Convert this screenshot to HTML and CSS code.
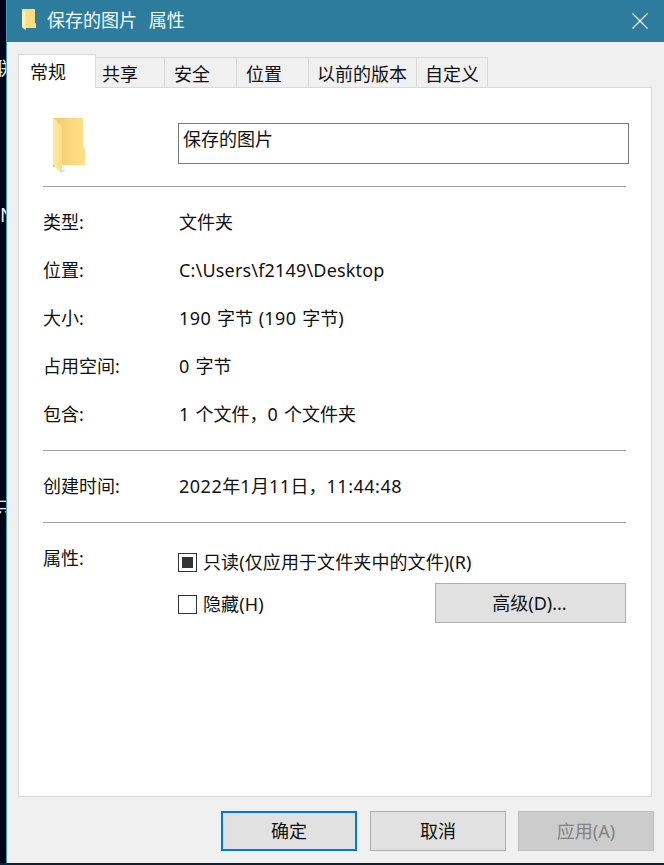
FILE: index.html
```html
<!DOCTYPE html>
<html lang="zh-CN">
<head>
<meta charset="utf-8">
<title>保存的图片 属性</title>
<link rel="stylesheet" href="styles.css">
</head>
<body>
<div class="desktop">
  <span class="frag frag-a">联</span>
  <span class="frag frag-b">N</span>
  <span class="frag frag-c">只</span>
</div>
<div class="window">
  <header class="titlebar">
    <svg class="title-icon" width="14" height="21" viewBox="0 0 14 21"><path d="M0 0h13v14h1v5H3.500v2L0 18z" fill="#fbdc85"/><path d="M0 0l3.500 3.500V21L0 18z" fill="#fff0b0"/></svg>
    <span class="title-text">保存的图片 属性</span>
    <svg class="close" width="16" height="16" viewBox="0 0 16 16"><path d="M.5.500l15 15M15.500.500l-15 15" stroke="#fff" stroke-width="1.100" fill="none"/></svg>
  </header>
  <div class="content">
    <nav class="tabs">
      <span class="tab active">常规</span>
      <span class="tab t1">共享</span>
      <span class="tab t2">安全</span>
      <span class="tab t3">位置</span>
      <span class="tab t4">以前的版本</span>
      <span class="tab t5">自定义</span>
    </nav>
    <main class="panel">
      <section class="name-row">
        <svg class="folder" width="36" height="58" viewBox="0 0 36 58">
          <defs>
            <linearGradient id="fg" x1="0" x2="1" y1="0" y2="0"><stop offset="0" stop-color="#eec96c"/><stop offset=".6" stop-color="#fbd97f"/><stop offset="1" stop-color="#ffe08a"/></linearGradient>
            <linearGradient id="ff" x1="0" x2="1" y1="0" y2="0"><stop offset="0" stop-color="#ffeba6"/><stop offset="1" stop-color="#fcdc84"/></linearGradient>
          </defs>
          <path d="M1 1h30v30h2v17H10v2H1z" fill="url(#fg)"/>
          <path d="M1 1l3 2 2 3 2 1 2 3v46l-3-2-2-2-4-5z" fill="url(#ff)"/>
          <path d="M10 53l3-1v2l-3 2z" fill="#e2e2e2"/>
          <path d="M33 48l2-1v1z" fill="#eee"/>
        </svg>
        <div class="name-box">保存的图片</div>
      </section>
      <hr class="rule">
      <dl class="info">
        <dt>类型:</dt><dd>文件夹</dd>
        <dt>位置:</dt><dd class="path">C:\Users\f2149\Desktop</dd>
        <dt>大小:</dt><dd><span class="num">190</span> 字节 (<span class="num">190</span> 字节)</dd>
        <dt>占用空间:</dt><dd><span class="num">0</span> 字节</dd>
        <dt>包含:</dt><dd><span class="num">1</span> 个文件，<span class="num">0</span> 个文件夹</dd>
      </dl>
      <hr class="rule">
      <dl class="info">
        <dt>创建时间:</dt><dd><span class="num">2022</span>年<span class="num">1</span>月<span class="num">11</span>日，<span class="num">11:44:48</span></dd>
      </dl>
      <hr class="rule">
      <section class="attrs">
        <div class="attrs-label">属性:</div>
        <div class="attrs-body">
          <div class="check-row">
            <span class="box"><span class="mark"></span></span>
            <span class="check-label">只读(仅应用于文件夹中的文件)(R)</span>
          </div>
          <div class="check-row second">
            <span class="box"></span>
            <span class="grow check-label">隐藏(H)</span>
            <span class="btn advanced">高级(D)...</span>
          </div>
        </div>
      </section>
    </main>
    <footer class="actions">
      <span class="btn ok">确定</span>
      <span class="btn cancel">取消</span>
      <span class="btn apply">应用(A)</span>
    </footer>
  </div>
</div>
<div class="bottom-strip"></div>
</body>
</html>
```
FILE: styles.css
```css
* { box-sizing: border-box; }
html, body { margin: 0; padding: 0; }
body {
  width: 664px;
  height: 865px;
  overflow: hidden;
  background: #03031a;
  font-family: "Noto Sans", "Noto Sans CJK SC", sans-serif;
  font-size: 18px;
  color: #111;
  position: relative;
}
.desktop { position: absolute; left: 0; top: 0; width: 6px; height: 865px; overflow: hidden; color: #eee; font-size: 18px; }
.frag { position: absolute; line-height: 20px; }
.frag-a { left: -6px; top: 58px; }
.frag-b { left: 0; top: 205px; font-size: 19px; }
.frag-c { left: -6px; top: 498px; }
.window {
  margin-left: 6px;
  width: 658px;
  height: 863px;
  background: #f0f0f0;
  border-left: 1px solid #3a9bbf;
  display: flex;
  flex-direction: column;
  position: relative;
}
.titlebar {
  height: 42px;
  flex: none;
  background: #2d7c9d;
  display: flex;
  align-items: center;
  color: #fff;
  padding: 0 16px 0 15px;
}
.title-icon { flex: none; margin-right: 11px; margin-top: -3px; }
.title-text { flex: 1; font-size: 18px; line-height: 24px; color: #f4fbff; margin-top: -2px; word-spacing: 7px; }
.close { flex: none; }
.content { flex: 1; display: flex; flex-direction: column; padding: 12px 12px 0 11px; }
.tabs { display: flex; align-items: flex-end; height: 34px; position: relative; z-index: 1; margin-bottom: -1px; }
.tab {
  height: 31px;
  border: 1px solid #d9d9d9;
  border-left: 0;
  background: #f0f0f0;
  display: flex;
  align-items: center;
  font-size: 18px;
  line-height: 24px;
  padding: 3px 0 0 6px;
  flex: none;
}
.tab.active {
  height: 34px;
  width: 78px;
  background: #fff;
  border-left: 1px solid #d9d9d9;
  border-bottom: 0;
  padding: 1px 0 0 11px;
}
.t1 { width: 69px; }
.t2 { width: 72px; padding-left: 9px; }
.t3 { width: 72px; padding-left: 9px; }
.t4 { width: 108px; padding-left: 8px; }
.t5 { width: 71px; padding-left: 8px; }
.panel {
  height: 710px;
  flex: none;
  background: #fff;
  border: 1px solid #d9d9d9;
  padding: 35px 25px 0 24px;
}
.name-row { display: flex; height: 63px; }
.folder { flex: none; margin: -6px -2px 0 9px; }
.name-box {
  margin-left: 92px;
  width: 451px;
  height: 41px;
  border: 1px solid #7a7a7a;
  padding: 2px 4px;
  line-height: 26px;
  flex: none;
}
.rule { height: 1px; border: 0; margin: 0; background: #a0a0a0; }
.info {
  margin: 0;
  display: grid;
  grid-template-columns: 136px 1fr;
  grid-auto-rows: 48px;
  padding: 11px 0 12px;
}
.info dt, .info dd { margin: 0; line-height: 48px; word-spacing: 1px; }
.path { letter-spacing: .18px; }
.num { letter-spacing: .5px; }
.attrs { display: flex; padding-top: 22px; }
.attrs-label { width: 135px; flex: none; line-height: 24px; padding-top: 1px; }
.attrs-body { flex: 1; padding-top: 5px; }
.check-row { display: flex; align-items: center; gap: 6px; height: 24px; line-height: 24px; }
.check-row.second { margin-top: 18px; }
.check-label { letter-spacing: .1px; }
.grow { flex: 1; }
.box {
  width: 19px;
  height: 19px;
  border: 1px solid #333;
  background: #fff;
  flex: none;
  display: flex;
  align-items: center;
  justify-content: center;
}
.mark { width: 11px; height: 11px; background: #333; }
.btn {
  display: flex;
  align-items: center;
  justify-content: center;
  background: #e1e1e1;
  border: 1px solid #adadad;
  height: 40px;
  font-size: 18px;
  line-height: 24px;
  flex: none;
}
.advanced { width: 191px; margin-bottom: 2px; padding-right: 2px; }
.actions { display: flex; padding: 14px 0 0 203px; gap: 13px; }
.actions .btn { width: 136px; }
.ok { border: 2px solid #0078d7; }
.apply { background: #cccccc; border-color: #bfbfbf; color: #838383; margin-left: -1px; }
.bottom-strip { height: 2px; background: #08233a; }
```
